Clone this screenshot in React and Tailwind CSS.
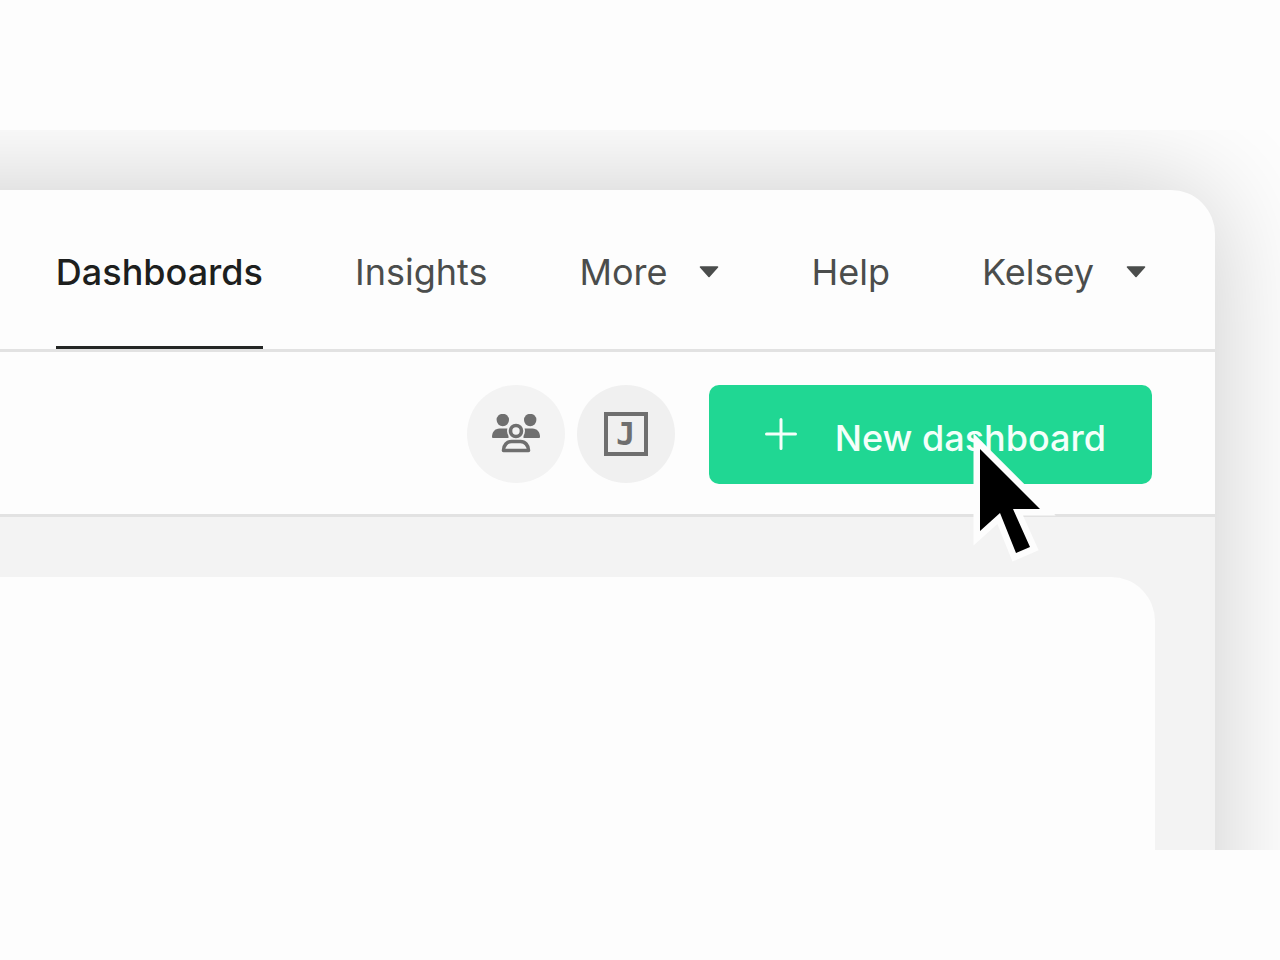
const NAV_ITEMS = [
  { label: "Dashboards", active: true },
  { label: "Insights" },
  { label: "More", menu: true },
  { label: "Help" },
  { label: "Kelsey", menu: true },
];

function Caret() {
  return (
    <svg viewBox="0 0 20 12" className="h-3 w-5 shrink-0" aria-hidden="true">
      <path
        d="M1.5 1h17L10 10.5z"
        fill="currentColor"
        stroke="currentColor"
        strokeWidth="1.6"
        strokeLinejoin="round"
      />
    </svg>
  );
}

function NavItem({ label, active, menu }) {
  if (menu) {
    return (
      <button
        type="button"
        className="flex items-center gap-8 pt-1 text-[#4b4d4c]"
      >
        {label}
        <Caret />
      </button>
    );
  }

  return (
    <a
      href="#"
      className={
        active
          ? "flex items-center border-b-3 border-[#242625] pt-2 font-medium text-[#1d1f1e]"
          : "flex items-center pt-1 text-[#4b4d4c]"
      }
    >
      {label}
    </a>
  );
}

function PeopleIcon() {
  return (
    <svg viewBox="0 0 48 40" className="h-10 w-12" aria-hidden="true">
      <g fill="#6f6f6f">
        <circle cx="10.8" cy="6" r="6.2" />
        <circle cx="38.2" cy="6" r="6.2" />
        <path d="M1 24q-1 0-1-1c0-5 3-8.500 7.500-8.500h9V24z" />
        <path d="M47 24q1 0 1-1c0-5-3-8.500-7.500-8.500h-9V24z" />
      </g>
      <circle cx="24" cy="17" r="9" fill="#f3f3f3" />
      <circle cx="24" cy="17" r="5.500" fill="none" stroke="#6f6f6f" strokeWidth="3.600" />
      <path
        d="M11.500 36.500c0-5.500 3.500-9 8-9h9c4.500 0 8 3.500 8 9z"
        fill="#f3f3f3"
        stroke="#6f6f6f"
        strokeWidth="3.600"
        strokeLinejoin="round"
      />
    </svg>
  );
}

function Cursor() {
  return (
    <svg
      viewBox="0 0 92 140"
      className="pointer-events-none absolute top-[44px] right-[90px] h-[140px] w-[92px]"
      aria-hidden="true"
    >
      <path
        d="M10 20v82l20-18 16 40 14-6-17-38h27z"
        fill="#fdfdfd"
        stroke="#fdfdfd"
        strokeWidth="13"
        strokeMiterlimit="4"
      />
      <path d="M10 20v82l20-18 16 40 14-6-17-38h27z" fill="#000" />
    </svg>
  );
}

function Header() {
  return (
    <nav className="flex h-[162px] justify-end gap-[92px] border-b-3 border-[#e2e2e2] pr-[69px] text-[36px]">
      {NAV_ITEMS.map((item) => (
        <NavItem key={item.label} {...item} />
      ))}
    </nav>
  );
}

function Toolbar() {
  return (
    <div className="flex h-[165px] items-center justify-end border-b-3 border-[#e2e2e2] pt-0.5 pr-[63px]">
      <button
        type="button"
        aria-label="Team"
        className="mr-3 flex size-[98px] items-center justify-center rounded-full bg-[#f3f3f3]"
      >
        <PeopleIcon />
      </button>
      <button
        type="button"
        className="mr-[34px] flex size-[98px] items-center justify-center rounded-full bg-[#f0f0f0]"
      >
        <span className="flex size-11 items-center justify-center border-4 border-[#6f6f6f] font-['DejaVu_Sans_Mono',monospace] text-[32px] leading-none font-bold text-[#6f6f6f]">
          J
        </span>
      </button>
      <div className="relative">
        <button
          type="button"
          className="flex h-[99px] items-center gap-[38px] rounded-[10px] bg-[#20d793] pr-[46px] pl-14 text-[36px] font-medium text-[#f4fffa]"
        >
          <svg viewBox="0 0 32 32" className="size-8" aria-hidden="true">
            <path
              d="M16 1.500v29M1.500 16h29"
              stroke="currentColor"
              strokeWidth="3"
              strokeLinecap="round"
            />
          </svg>
          <span className="pt-2">New dashboard</span>
        </button>
        <Cursor />
      </div>
    </div>
  );
}

export default function App() {
  return (
    <div className="min-h-screen bg-[#fdfdfd] pt-[130px] font-['Inter',sans-serif]">
      <main className="flex aspect-video overflow-hidden pt-[60px] pr-[65px]">
        <div className="-mb-40 -ml-40 flex grow flex-col overflow-hidden rounded-tr-[44px] bg-[#fdfdfd] shadow-[0_0_110px_rgba(0,0,0,0.2)]">
          <Header />
          <Toolbar />
          <section className="flex grow bg-[#f3f3f3] pt-[60px] pr-[60px]">
            <div className="grow rounded-tr-[44px] bg-[#fdfdfd]" />
          </section>
        </div>
      </main>
    </div>
  );
}
